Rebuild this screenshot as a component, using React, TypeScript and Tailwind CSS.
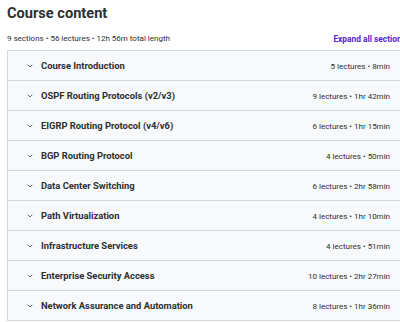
const sections = [
  { title: 'Course Introduction', lectures: 5, length: '8min' },
  { title: 'OSPF Routing Protocols (v2/v3)', lectures: 9, length: '1hr 42min' },
  { title: 'EIGRP Routing Protocol (v4/v6)', lectures: 6, length: '1hr 15min' },
  { title: 'BGP Routing Protocol', lectures: 4, length: '50min' },
  { title: 'Data Center Switching', lectures: 6, length: '2hr 58min' },
  { title: 'Path Virtualization', lectures: 4, length: '1hr 10min' },
  { title: 'Infrastructure Services', lectures: 4, length: '51min' },
  { title: 'Enterprise Security Access', lectures: 10, length: '2hr 27min' },
  { title: 'Network Assurance and Automation', lectures: 8, length: '1hr 36min' },
]

function Chevron() {
  return (
    <svg className="w-[8px] h-[8px] text-[#6a6f73]" viewBox="0 0 8 8" fill="none" stroke="currentColor" strokeWidth={1}>
      <path d="M2 3 4 5 6 3" strokeLinecap="round" strokeLinejoin="round" />
    </svg>
  )
}

export default function App() {
  return (
    <div className="w-[400px] h-[322px] overflow-hidden bg-white font-['Roboto',sans-serif] text-[#2d2f31]">
      <div className="w-[399px] ml-[7px]">
        {/* Heading */}
        <h2 className="text-[14.6px] leading-[20px] font-bold pt-[3px]">Course content</h2>

        {/* Summary row */}
        <div className="flex items-center justify-between mt-[9px] h-[14px]">
          <span className="text-[8px] text-[#2d2f31]">9 sections • 56 lectures • 12h 56m total length</span>
          <span className="text-[8.4px] font-bold text-[#5624d0]">Expand all sections</span>
        </div>

        {/* Sections */}
        <div className="mt-[4px] border-t border-l border-[#d1d7dc]">
          {sections.map((s) => (
            <div
              key={s.title}
              className="h-[30px] flex items-center justify-between bg-[#f7f9fa] border-b border-[#d1d7dc] pl-[18px] pr-[16px] pt-[2px]"
            >
              <div className="flex items-center gap-[7px]">
                <Chevron />
                <span className="text-[9.4px] font-bold">{s.title}</span>
              </div>
              <span className="text-[8px] text-[#2d2f31]">
                {s.lectures} lectures • {s.length}
              </span>
            </div>
          ))}
        </div>
      </div>
    </div>
  )
}
